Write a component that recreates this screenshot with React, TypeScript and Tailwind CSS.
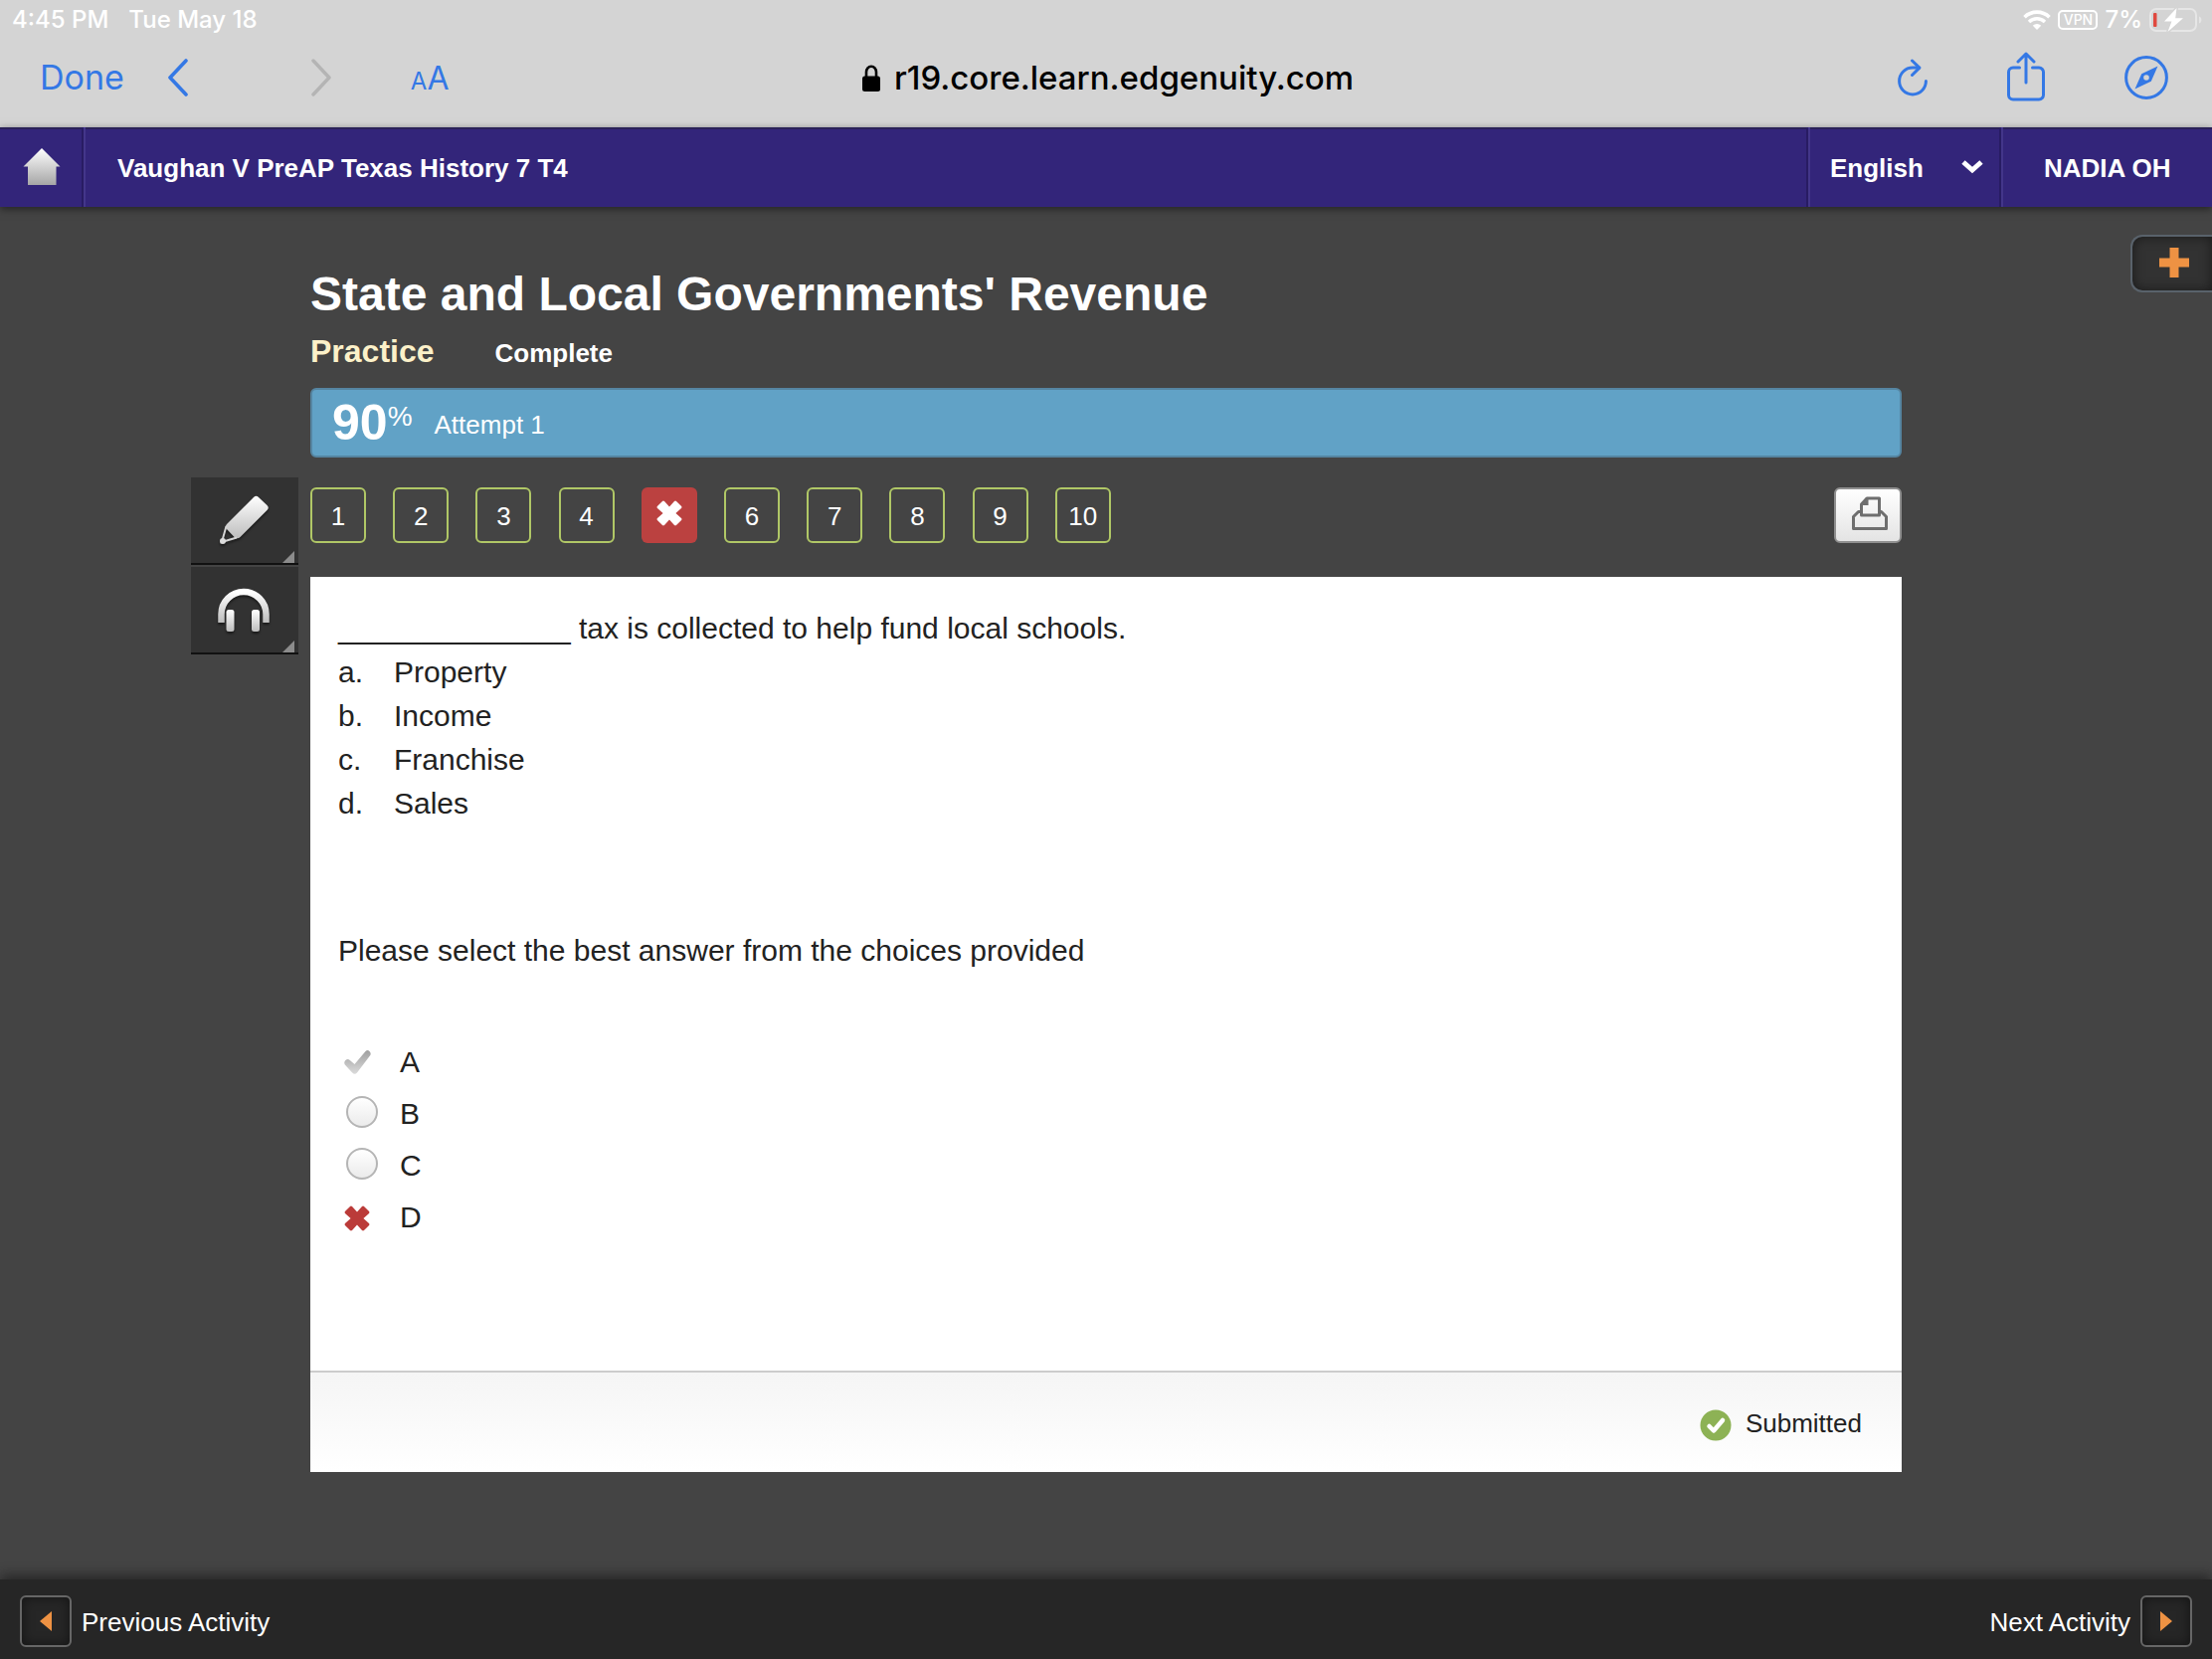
import { useState, type ReactNode } from "react";

const QUESTIONS = [1, 2, 3, 4, 5, 6, 7, 8, 9, 10];
const WRONG_QUESTION = 5;

const CHOICES = [
  { letter: "a.", text: "Property" },
  { letter: "b.", text: "Income" },
  { letter: "c.", text: "Franchise" },
  { letter: "d.", text: "Sales" },
];

type Mark = "correct" | "wrong" | null;

const ANSWERS: { label: string; mark: Mark }[] = [
  { label: "A", mark: "correct" },
  { label: "B", mark: null },
  { label: "C", mark: null },
  { label: "D", mark: "wrong" },
];

function StatusBar() {
  return (
    <div className="flex h-10 items-center justify-between pl-3 pr-[10px] font-['Inter',sans-serif] text-2xl font-medium leading-10 text-white">
      <div className="flex gap-5">
        <span>4:45 PM</span>
        <span>Tue May 18</span>
      </div>
      <div className="flex items-center gap-[7px]">
        <svg width="28" height="20" viewBox="0 0 28 20" fill="none" stroke="#fff" aria-hidden="true">
          <path d="M1.5 7.2a18 18 0 0 1 25 0" strokeWidth="3.6" />
          <path d="M6 12a11.5 11.5 0 0 1 16 0" strokeWidth="3.4" />
          <path d="M14 20l-4.2-4.3a6 6 0 0 1 8.4 0z" fill="#fff" stroke="none" />
        </svg>
        <span className="flex h-5 w-10 items-center justify-center rounded-[5px] border-2 border-white text-sm leading-4">
          VPN
        </span>
        <span>7%</span>
        <svg width="53" height="24" viewBox="0 0 53 24" fill="none" aria-hidden="true">
          <rect x="1" y="1" width="46" height="22" rx="6" stroke="#e6e6e6" strokeWidth="2" />
          <path d="M50 8.5v7c3.2-1 3.2-6 0-7z" fill="#e6e6e6" />
          <rect x="4" y="5" width="3.5" height="14" rx="1" fill="#e0483e" />
          <path
            d="M27.5 0 15 13.6h7.5L18.5 24 34 10.2h-7.8z"
            fill="#fff"
            stroke="#d4d4d4"
            strokeWidth="3"
            paintOrder="stroke"
          />
        </svg>
      </div>
    </div>
  );
}

function BrowserBar() {
  return (
    <div className="grid h-22 grid-cols-[1fr_auto_1fr] items-start px-10 font-['Inter',sans-serif] text-[#3478e5]">
      <div className="flex h-19 items-center">
        <button type="button" className="text-[34px] leading-10">
          Done
        </button>
        <button type="button" aria-label="Back" className="ml-11">
          <svg width="20" height="38" viewBox="0 0 20 38" fill="none" stroke="#3478e5" strokeWidth="3.6" strokeLinecap="round" strokeLinejoin="round">
            <path d="M18 2 2 19l16 17" />
          </svg>
        </button>
        <button type="button" aria-label="Forward" className="ml-31">
          <svg width="20" height="38" viewBox="0 0 20 38" fill="none" stroke="#b4b4b4" strokeWidth="3.4" strokeLinecap="round" strokeLinejoin="round">
            <path d="m2 2 16 17L2 36" />
          </svg>
        </button>
        <button type="button" aria-label="Text size" className="ml-20 flex items-baseline pt-1 leading-10">
          <span className="text-2xl leading-10">A</span>
          <span className="text-[32px] leading-10">A</span>
        </button>
      </div>
      <div className="flex h-19 items-center gap-[14px] pl-1 text-[33px] font-medium leading-10 text-black">
        <svg width="18" height="27" viewBox="0 0 18 27" aria-hidden="true">
          <path d="M4 13V7.5a5 5.7 0 0 1 10 0V13" fill="none" stroke="#000" strokeWidth="2.6" />
          <rect y="11.5" width="18" height="15.5" rx="2.5" fill="#000" />
        </svg>
        r19.core.learn.edgenuity.com
      </div>
      <div className="flex h-19 items-center justify-end gap-20 pr-1">
        <button type="button" aria-label="Reload">
          <svg width="30" height="38" viewBox="0 0 30 38" fill="none" stroke="#3478e5" strokeWidth="3" strokeLinecap="round" strokeLinejoin="round">
            <path d="M28.4 22.5A13.4 13.4 0 1 1 15 9.1h6.5" />
            <path d="m14.5 2 7.4 7.1-7.4 7.4" />
          </svg>
        </button>
        <button type="button" aria-label="Share" className="pb-[2px]">
          <svg width="38" height="50" viewBox="0 0 38 50" fill="none" stroke="#3478e5" strokeWidth="3" strokeLinecap="round" strokeLinejoin="round">
            <path d="M12.5 16H6a4.5 4.5 0 0 0-4.5 4.5v23A4.5 4.5 0 0 0 6 48h26a4.5 4.5 0 0 0 4.5-4.5v-23A4.5 4.5 0 0 0 32 16h-6.5" />
            <path d="M19 31V2M11 10l8-8 8 8" />
          </svg>
        </button>
        <button type="button" aria-label="Open in Safari">
          <svg width="44" height="44" viewBox="0 0 44 44" fill="none">
            <circle cx="22" cy="22" r="20.4" stroke="#3478e5" strokeWidth="3" />
            <path
              fillRule="evenodd"
              d="M33.5 10.5 26.8 25.8 10.5 33.5 17.2 18.2zM22 19.2a2.8 2.8 0 1 0 0 5.6 2.8 2.8 0 0 0 0-5.6z"
              fill="#3478e5"
            />
          </svg>
        </button>
      </div>
    </div>
  );
}

function CourseHeader() {
  const [language, setLanguage] = useState("English");

  return (
    <header className="relative flex h-20 items-stretch bg-[#33257a] text-[26px] font-bold leading-8 text-white shadow-[inset_0_2px_0_#2a2158,0_2px_8px_rgba(0,0,0,0.5)]">
      <a
        href="#home"
        aria-label="Home"
        className="flex w-[84px] items-center justify-center border-r-2 border-[#281c63] pl-[2px]"
      >
        <svg width="38" height="40" viewBox="0 0 38 40">
          <defs>
            <linearGradient id="home-fill" x1="0" y1="0" x2="0" y2="1">
              <stop offset="0" stopColor="#fff" />
              <stop offset="1" stopColor="#a6a6a6" />
            </linearGradient>
          </defs>
          <path d="M19 1 37.5 19.5h-4V38H5V19.5H.5z" fill="url(#home-fill)" />
        </svg>
      </a>
      <div className="flex flex-1 items-center border-l-2 border-[#43368a] pl-8 pt-[2px]">
        Vaughan V PreAP Texas History 7 T4
      </div>
      <div className="relative flex w-[194px] items-center border-l-2 border-r-2 border-l-[#43368a] border-r-[#281c63] pt-[2px] shadow-[-2px_0_0_#281c63]">
        <select
          aria-label="Language"
          value={language}
          onChange={(e) => setLanguage(e.target.value)}
          className="w-full appearance-none bg-transparent py-3 pl-5 pr-12 text-[26px] font-bold leading-12 text-white"
        >
          <option>English</option>
        </select>
        <svg className="pointer-events-none absolute right-4 top-8" width="22" height="16" viewBox="0 0 22 16" fill="none" stroke="#fff" strokeWidth="5">
          <path d="m2 3 9 8 9-8" />
        </svg>
      </div>
      <div className="flex w-[212px] items-center border-l-2 border-[#43368a] pl-[41px] pt-[2px]">
        NADIA OH
      </div>
    </header>
  );
}

function ToolButton({ label, children }: { label: string; children: ReactNode }) {
  return (
    <button
      type="button"
      aria-label={label}
      className="relative flex h-[88px] w-[108px] items-center justify-center border-b-2 border-[#111] bg-[#323232]"
    >
      {children}
      <span className="absolute bottom-0 right-1 border-b-12 border-l-12 border-b-[#8c8c8c] border-l-transparent" />
    </button>
  );
}

function ToolRail() {
  return (
    <div className="flex flex-col gap-[2px]">
      <ToolButton label="Highlighter">
        <svg width="54" height="54" viewBox="0 0 54 54" className="drop-shadow-[0_2px_1px_rgba(0,0,0,0.5)]">
          <defs>
            <linearGradient id="tool-fill" x1="0" y1="0" x2="0" y2="1">
              <stop offset="0" stopColor="#fff" />
              <stop offset="1" stopColor="#bdbdbd" />
            </linearGradient>
          </defs>
          <path
            d="M36 4q2.5-2.5 5 0l8.5 8q2.500 2.500 0 5L22.500 44q-2 2-5 1L8.500 35.500q-1.500-2.500.5-4.500z"
            fill="url(#tool-fill)"
          />
          <path d="M8.5 33 4 49l15-4.500" fill="none" stroke="#d5d5d5" strokeWidth="2" />
          <circle cx="5" cy="48" r="3" fill="#ddd" />
        </svg>
      </ToolButton>
      <ToolButton label="Read aloud">
        <svg width="54" height="48" viewBox="0 0 54 48" className="drop-shadow-[0_2px_1px_rgba(0,0,0,0.5)]">
          <path d="M3.5 37v-8.500a22.500 22.500 0 0 1 45 0V37" fill="none" stroke="url(#tool-fill)" strokeWidth="6.5" />
          <rect x="8.5" y="24" width="8" height="22" rx="2.5" fill="url(#tool-fill)" />
          <rect x="34" y="24" width="8" height="22" rx="2.5" fill="url(#tool-fill)" />
        </svg>
      </ToolButton>
    </div>
  );
}

function CrossIcon({ className }: { className: string }) {
  return (
    <svg viewBox="0 0 26 26" className={className} aria-hidden="true">
      <path d="M6 .9q1-.8 2 .1l5 5.6L18 1q1-.9 2-.1L25.100 6q.8 1-.1 2l-5.600 5 5.600 5q.9 1 .1 2L20 25.100q-1 .8-2-.1l-5-5.600L8 25q-1 .9-2 .1L.9 20q-.8-1 .1-2l5.600-5L1 8Q.1 7 .9 6z" />
    </svg>
  );
}

function QuestionNav() {
  return (
    <div className="flex items-center justify-between">
      <nav aria-label="Questions" className="grid w-[832px] grid-cols-10 text-[26px] leading-8 text-white">
        {QUESTIONS.map((n) =>
          n === WRONG_QUESTION ? (
            <button
              key={n}
              type="button"
              aria-label={`Question ${n}, incorrect`}
              className="flex size-14 items-center justify-center rounded-md bg-[#bb4140] pb-1"
            >
              <CrossIcon className="size-[26px] fill-white" />
            </button>
          ) : (
            <button
              key={n}
              type="button"
              className="flex size-14 items-center justify-center rounded-md border-2 border-[#b0c766] pt-[2px]"
            >
              {n}
            </button>
          ),
        )}
      </nav>
      <button
        type="button"
        aria-label="Print"
        className="flex h-14 w-17 items-center justify-center rounded-md border-2 border-[#8f8f8f] bg-linear-to-b from-white to-[#e4e4e4] pb-1 pl-1"
      >
        <svg width="38" height="34" viewBox="0 0 38 34" fill="none" stroke="#6e6e6e" strokeWidth="3" strokeLinejoin="round">
          <path d="M10 15.5H7.5l-5 5v12h33v-12l-5-5H28" />
          <path d="M16 2h12.5v17h-18V8z" />
          <path d="M10.5 9h7V2z" fill="#6e6e6e" stroke="none" />
        </svg>
      </button>
    </div>
  );
}

function AnswerRow({ label, mark }: { label: string; mark: Mark }) {
  const id = `answer-${label}`;

  return (
    <li className="flex h-13 items-center">
      <span className="flex w-[62px] items-center pl-[6px]">
        {mark === "correct" ? (
          <svg width="28" height="26" viewBox="0 0 28 26" role="img" aria-label="Correct answer">
            <defs>
              <linearGradient id="check-fill" x1="0" y1="0" x2="0" y2="1">
                <stop offset="0" stopColor="#a0a0a0" />
                <stop offset="1" stopColor="#dadada" />
              </linearGradient>
            </defs>
            <path
              d="M21.5 2q2-1.800 4 0 2 2 .6 4.200L13 23.500q-2.400 2.400-4.800 0L.8 15.500q-1.400-2.500.6-4.500 2.200-1.800 4.400 0L10.500 15z"
              fill="url(#check-fill)"
            />
          </svg>
        ) : null}
        {mark === "wrong" ? <CrossIcon className="mt-[2px] size-[26px] fill-[#bb3b39]" /> : null}
        {mark === null ? (
          <input
            type="radio"
            id={id}
            name="answer"
            className="mb-1 ml-[2px] size-8 appearance-none rounded-full border-2 border-[#b5b5b5] bg-linear-to-b from-white to-[#ebebeb]"
          />
        ) : null}
      </span>
      <label htmlFor={mark === null ? id : undefined}>{label}</label>
    </li>
  );
}

function QuestionPanel() {
  return (
    <section className="flex min-h-[900px] flex-col bg-white text-[30px] leading-11 text-[#222]">
      <div className="flex-1 px-7 pt-[30px]">
        <p>______________ tax is collected to help fund local schools.</p>
        <ol>
          {CHOICES.map((c) => (
            <li key={c.letter} className="flex">
              <span className="w-14">{c.letter}</span>
              {c.text}
            </li>
          ))}
        </ol>
        <p className="mt-[104px]">Please select the best answer from the choices provided</p>
        <ul className="mt-16">
          {ANSWERS.map((a) => (
            <AnswerRow key={a.label} label={a.label} mark={a.mark} />
          ))}
        </ul>
      </div>
      <div className="flex h-[102px] items-center justify-end gap-[14px] border-t-2 border-[#ccc] bg-linear-to-b from-[#f5f5f5] to-white px-10 text-[26px] leading-8">
        <svg width="32" height="32" viewBox="0 0 32 32" className="mt-[6px]" aria-hidden="true">
          <circle cx="16" cy="16" r="15.5" fill="#8db255" />
          <path d="m9.5 17 4.500 4.500 9-10.500" fill="none" stroke="#fff" strokeWidth="4.5" strokeLinecap="round" strokeLinejoin="round" />
        </svg>
        <span className="mt-[2px]">Submitted</span>
      </div>
    </section>
  );
}

function ArrowBox({ d }: { d: string }) {
  return (
    <span className="flex size-13 items-center justify-center rounded-md border-2 border-[#666] bg-[#262626] shadow-[inset_0_0_12px_rgba(0,0,0,0.5)]">
      <svg width="12" height="20" viewBox="0 0 12 20">
        <path d={d} fill="#ee9243" />
      </svg>
    </span>
  );
}

function ActivityFooter() {
  return (
    <footer className="relative flex h-20 items-center justify-between bg-[#262626] px-5 pt-1 text-[26px] leading-8 text-white shadow-[0_-4px_12px_rgba(0,0,0,0.45)]">
      <button type="button" className="flex items-center gap-[10px]">
        <ArrowBox d="M12 0v20L0 10z" />
        <span className="pt-[2px]">Previous Activity</span>
      </button>
      <button type="button" className="flex items-center gap-[10px]">
        <span className="pt-[2px]">Next Activity</span>
        <ArrowBox d="M0 0v20l12-10z" />
      </button>
    </footer>
  );
}

export default function App() {
  return (
    <div className="flex min-h-screen flex-col bg-[#444] font-['Liberation_Sans',Arial,sans-serif]">
      <div className="bg-[#d4d4d4]">
        <StatusBar />
        <BrowserBar />
      </div>
      <CourseHeader />
      <main className="relative flex-1 pb-20">
        <button
          type="button"
          aria-label="Open panel"
          className="absolute right-0 top-7 flex h-[58px] w-[82px] items-center justify-center rounded-l-xl border-2 border-r-0 border-[#59626b] bg-[#323232] pb-[2px] pl-1 shadow-[inset_0_0_12px_rgba(0,0,0,0.5)]"
        >
          <svg width="30" height="30" viewBox="0 0 30 30">
            <path d="M10.5 0h9v10.500H30v9H19.500V30h-9V19.500H0v-9h10.500z" fill="#ee9243" />
          </svg>
        </button>
        <div className="mx-auto flex max-w-[1840px]">
          <div className="w-[108px] shrink-0 pt-[272px]">
            <ToolRail />
          </div>
          <div className="ml-3 mr-30 flex min-w-0 flex-1 flex-col pt-15">
            <h1 className="text-5xl font-bold leading-14 text-white">
              State and Local Governments&apos; Revenue
            </h1>
            <div className="mt-[5px] flex items-baseline gap-[61px] font-bold leading-12">
              <h2 className="text-[32px] text-[#fcf1c9]">Practice</h2>
              <span className="text-[26px] text-white">Complete</span>
            </div>
            <div className="mt-[11px] flex h-[70px] items-center rounded-md border-2 border-[#5585a1] bg-[#61a2c6] pl-5 text-white">
              <span className="text-[50px] font-bold leading-[60px]">90</span>
              <span className="mb-3 text-[28px] leading-8">%</span>
              <span className="ml-[22px] mt-1 text-[26px] leading-8">Attempt 1</span>
            </div>
            <div className="mb-[34px] mt-[30px]">
              <QuestionNav />
            </div>
            <QuestionPanel />
          </div>
        </div>
      </main>
      <ActivityFooter />
    </div>
  );
}
